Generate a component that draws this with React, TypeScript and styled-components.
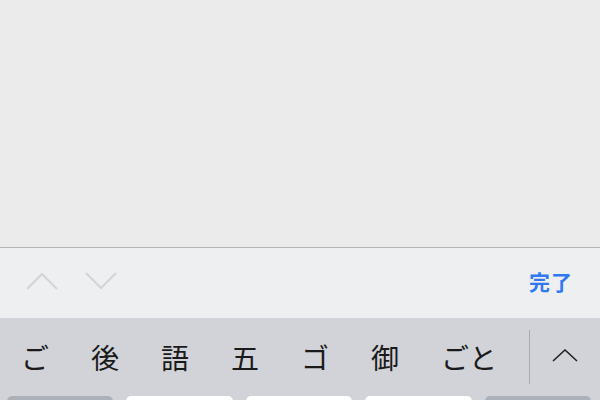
import React from 'react'
import styled, { createGlobalStyle } from 'styled-components'

const GlobalStyle = createGlobalStyle`
    html, body {
        margin: 0;
        padding: 0;
        background: #ebebeb;
    }
    body {
        font-family: "Noto Sans CJK JP", "Noto Sans", sans-serif;
    }
`

const Screen = styled.div`
    width: 600px;
    height: 400px;
    display: flex;
    flex-direction: column;
    overflow: hidden;
`

const Content = styled.div`
    height: 247px;
    flex-shrink: 0;
    background: #ebebeb;
    border-bottom: 1px solid #b4b4b6;
`

const Toolbar = styled.div`
    height: 70px;
    flex-shrink: 0;
    background: #eeeff1;
    display: flex;
    align-items: center;
    padding: 0 27px 4px 26px;
    box-sizing: border-box;
    gap: 27px;
`

const NavArrow = styled.svg`
    width: 32px;
    height: 18px;
`

const Done = styled.span`
    margin-left: auto;
    color: #3079f0;
    font-size: 21px;
    font-weight: 700;
    letter-spacing: 1px;
`

const CandidateBar = styled.div`
    height: 78px;
    flex-shrink: 0;
    background: #d1d3d8;
    display: flex;
    align-items: center;
`

const Candidates = styled.div`
    flex: 1;
    display: flex;
    align-items: center;
    gap: 42px;
    padding-left: 21px;
`

const Candidate = styled.span`
    font-size: 28px;
    font-weight: 400;
    color: #1a1a1a;
    line-height: 1;
`

const Divider = styled.div`
    width: 1px;
    height: 54px;
    background: #a8aaaf;
`

const Expand = styled.div`
    width: 70px;
    display: flex;
    justify-content: center;
    padding-bottom: 4px;
`

const KeyRow = styled.div`
    flex-shrink: 0;
    background: #d1d3d8;
    display: flex;
    padding: 0 9px 0 7px;
    gap: 13px;
`

const Key = styled.div<{ $dark?: boolean }>`
    flex: 1;
    height: 40px;
    border-radius: 5px;
    background: ${p => (p.$dark ? '#acb0b8' : '#ffffff')};
`

const candidates = ['ご', '後', '語', '五', 'ゴ', '御', 'ごと']

const App = () => {
    return (
        <Screen>
            <GlobalStyle />
            <Content />
            <Toolbar>
                <NavArrow viewBox="0 0 32 18">
                    <polyline points="1,17 16,2 31,17" fill="none" stroke="#d3d4d8" strokeWidth="2" />
                </NavArrow>
                <NavArrow viewBox="0 0 32 18">
                    <polyline points="1,1 16,16 31,1" fill="none" stroke="#d3d4d8" strokeWidth="2" />
                </NavArrow>
                <Done>完了</Done>
            </Toolbar>
            <CandidateBar>
                <Candidates>
                    {candidates.map(c => (
                        <Candidate key={c}>{c}</Candidate>
                    ))}
                </Candidates>
                <Divider />
                <Expand>
                    <svg width="26" height="13" viewBox="0 0 26 13">
                        <polyline points="1,12 13,1 25,12" fill="none" stroke="#222" strokeWidth="1.6" />
                    </svg>
                </Expand>
            </CandidateBar>
            <KeyRow>
                <Key $dark />
                <Key />
                <Key />
                <Key />
                <Key $dark />
            </KeyRow>
        </Screen>
    )
}

export default App
